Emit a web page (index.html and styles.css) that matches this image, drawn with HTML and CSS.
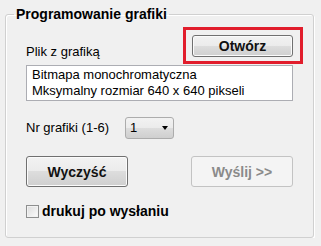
FILE: index.html
```html
<!DOCTYPE html>
<html lang="pl">
<head>
	<meta charset="UTF-8">
	<title>Programowanie grafiki</title>
	<link rel="stylesheet" href="styles.css">
</head>
<body>
	<fieldset class="group">
		<legend class="group-title">Programowanie grafiki</legend>
		<div class="row file-row">
			<span class="label file-label">Plik z grafiką</span>
			<span class="mark"><button class="btn btn-open">Otwórz</button></span>
		</div>
		<div class="info">Bitmapa monochromatyczna<br>Mksymalny rozmiar 640 x 640 pikseli</div>
		<div class="row num-row">
			<span class="label num-label">Nr grafiki (1-6)</span>
			<div class="combo"><span>1</span><span class="arrow"></span></div>
		</div>
		<div class="row btn-row">
			<button class="btn btn-big">Wyczyść</button>
			<button class="btn btn-big" disabled>Wyślij &gt;&gt;</button>
		</div>
		<label class="check-row"><span class="check"></span>drukuj po wysłaniu</label>
	</fieldset>
</body>
</html>
```
FILE: styles.css
```css
*{
	margin: 0;
	padding: 0;
	box-sizing: border-box;
}
body{
	background: #f0f0f0;
	font-family: "Liberation Sans", Arial, sans-serif;
	font-size: 13px;
	line-height: 16px;
	color: #000;
}
.group{
	margin: 6px 7px 0 5px;
	padding: 0 20px 18px 20px;
	border: 1px solid #d0d0d0;
	border-radius: 3px;
	box-shadow: inset 1px 1px 0 #fff, 1px 1px 0 #fff;
	min-width: 0;
}
.group-title{
	margin-left: -12px;
	padding: 0 2px;
	font-size: 14px;
	font-weight: bold;
	line-height: 16px;
}
.row{
	display: flex;
	justify-content: space-between;
}
.file-row{
	margin-top: 5px;
}
.file-label{
	align-self: flex-end;
	margin-bottom: 4px;
}
.mark{
	border: 3px solid #e11d2c;
	padding: 5px 7px 4px 6px;
	margin-right: -10px;
	display: flex;
}
.btn{
	font-family: inherit;
	font-size: 14px;
	font-weight: bold;
	color: #111;
	border: 1px solid #707070;
	border-radius: 3px;
	background: linear-gradient(#f2f2f2 0%, #ebebeb 50%, #dddddd 50%, #cfcfcf 100%);
	box-shadow: inset 0 0 0 1px #fbfbfb;
}
.btn-open{
	width: 101px;
	height: 22px;
}
.btn-big{
	width: 102px;
	height: 31px;
}
.btn:disabled{
	color: #8a8a8a;
	border-color: #c3c3c3;
	background: #f4f4f4;
	box-shadow: none;
}
.info{
	margin-top: 1px;
	height: 36px;
	border: 1px solid #acadb3;
	background: #fff;
	padding: 1px 5px;
}
.num-row{
	margin-top: 16px;
	justify-content: flex-start;
	align-items: center;
}
.num-label{
	width: 99px;
}
.combo{
	width: 49px;
	height: 22px;
	border: 1px solid #acacac;
	border-radius: 3px;
	background: linear-gradient(#f2f2f2 0%, #ebebeb 50%, #dddddd 50%, #cfcfcf 100%);
	display: flex;
	justify-content: space-between;
	align-items: center;
	padding: 0 5px 0 4px;
}
.arrow{
	border-style: solid;
	border-width: 4px 3.5px 0 3.5px;
	border-color: #000 transparent transparent transparent;
}
.btn-row{
	margin-top: 17px;
}
.check-row{
	margin-top: 16px;
	display: flex;
	align-items: center;
	font-size: 14px;
	font-weight: bold;
}
.check{
	width: 13px;
	height: 13px;
	margin-right: 3px;
	border: 1px solid #8e8f8f;
	background: linear-gradient(135deg, #dcdcdc, #fcfcfc);
	box-shadow: inset 0 0 0 1px #f2f2f2;
}
```
